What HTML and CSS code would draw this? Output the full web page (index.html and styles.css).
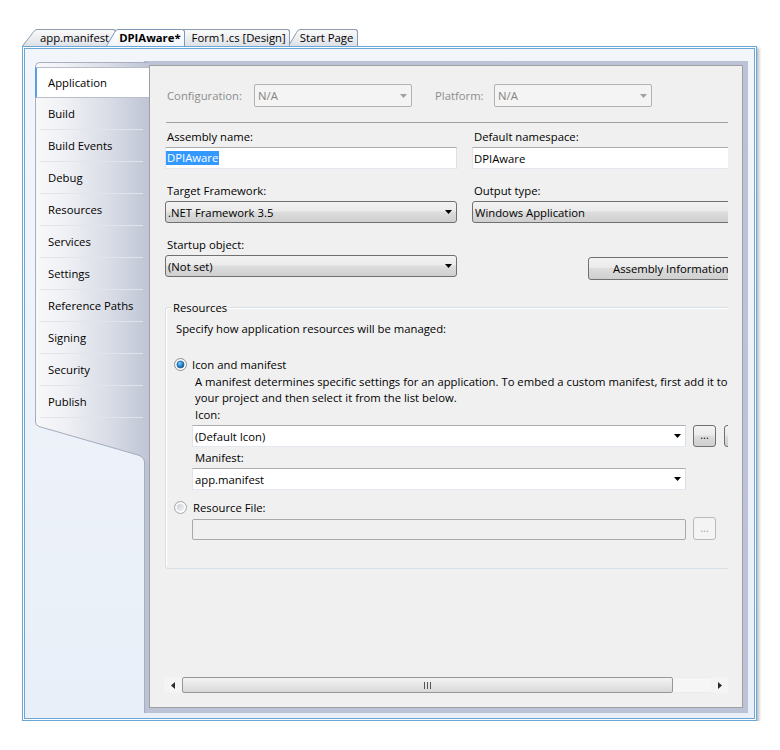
FILE: index.html
```html
<!DOCTYPE html>
<html>
<head>
<meta charset="utf-8">
<title>DPIAware - Project Properties</title>
<link rel="stylesheet" href="styles.css">
</head>
<body>
<svg class="defs" width="0" height="0" aria-hidden="true">
  <defs>
    <linearGradient id="gTab" x1="0" y1="0" x2="0" y2="1">
      <stop offset="0" stop-color="#fafafa"/>
      <stop offset="1" stop-color="#dde1e7"/>
    </linearGradient>
    <linearGradient id="gTabA" x1="0" y1="0" x2="0" y2="1">
      <stop offset="0" stop-color="#ffffff"/>
      <stop offset="1" stop-color="#f1f5fa"/>
    </linearGradient>
    <linearGradient id="gSide" gradientUnits="userSpaceOnUse" x1="0" y1="0" x2="114" y2="0">
      <stop offset="0" stop-color="#f8f8fa"/>
      <stop offset="0.25" stop-color="#f0f1f5"/>
      <stop offset="0.65" stop-color="#d9dce6"/>
      <stop offset="1" stop-color="#bfc5d5"/>
    </linearGradient>
    <linearGradient id="gRadio" x1="0" y1="0" x2="1" y2="1">
      <stop offset="0" stop-color="#f4f4f4"/>
      <stop offset="1" stop-color="#ffffff"/>
    </linearGradient>
    <linearGradient id="gRadioIn" x1="0" y1="0" x2="1" y2="1">
      <stop offset="0" stop-color="#c9cdd3"/>
      <stop offset="1" stop-color="#f4f5f6"/>
    </linearGradient>
    <radialGradient id="gDot" cx="0.4" cy="0.35" r="0.7">
      <stop offset="0" stop-color="#8fd0f5"/>
      <stop offset="0.5" stop-color="#2a8ad4"/>
      <stop offset="1" stop-color="#12508f"/>
    </radialGradient>
  </defs>
</svg>

<div class="tabstrip">
  <div class="tab t1">
    <svg class="slant" width="15" height="17" viewBox="0 0 15 17"><path class="sl-fill" d="M0,17 L11,3.5 Q13,1 15,1 L15,17 Z"/><path class="sl-line" d="M0.5,17 L11,3.5 Q13,0.5 15,0.5"/></svg>
    <div class="tab-body">app.manifest</div>
  </div>
  <div class="tab t2 active">
    <svg class="slant" width="12" height="17" viewBox="0 0 12 17"><path class="sl-fill" d="M0,17 L8.5,3.5 Q10,1 12,1 L12,17 Z"/><path class="sl-line" d="M0.5,17 L8.5,3.5 Q10,0.5 12,0.5"/></svg>
    <div class="tab-body">DPIAware*</div>
  </div>
  <div class="tab t3">
    <svg class="slant" width="12" height="17" viewBox="0 0 12 17"><path class="sl-fill" d="M0,17 L8.5,3.5 Q10,1 12,1 L12,17 Z"/><path class="sl-line" d="M0.5,17 L8.5,3.5 Q10,0.5 12,0.5"/></svg>
    <div class="tab-body">Form1.cs [Design]</div>
  </div>
  <div class="tab t4">
    <svg class="slant" width="12" height="17" viewBox="0 0 12 17"><path class="sl-fill" d="M0,17 L8.5,3.5 Q10,1 12,1 L12,17 Z"/><path class="sl-line" d="M0.5,17 L8.5,3.5 Q10,0.5 12,0.5"/></svg>
    <div class="tab-body">Start Page</div>
  </div>
</div>

<div class="frame">
  <div class="frame-in">
    <div class="sidebar">
      <div class="side-list">
        <div class="side-item sel">Application</div>
        <div class="side-item">Build</div>
        <div class="side-item">Build Events</div>
        <div class="side-item">Debug</div>
        <div class="side-item">Resources</div>
        <div class="side-item">Services</div>
        <div class="side-item">Settings</div>
        <div class="side-item">Reference Paths</div>
        <div class="side-item">Signing</div>
        <div class="side-item">Security</div>
        <div class="side-item">Publish</div>
      </div>
      <svg class="side-tail" width="114" height="44" viewBox="0 0 114 44">
        <path d="M0,0 L0,4 Q0,7.5 4,8.5 L103,37 Q109,39 109,44 L114,44 L114,0 Z" fill="url(#gSide)"/>
        <path d="M0.5,0 L0.5,4 Q0.5,7.5 4,8.5 L103,37 Q109.5,39 109.5,44" fill="none" stroke="#a3aabd" stroke-width="1"/>
      </svg>
    </div>

    <div class="band">
      <div class="panel">
        <div class="viewport">
          <div class="cfg-row">
            <div class="cfg-label c1">Configuration:</div>
            <div class="combo-dis"><span>N/A</span><svg width="7" height="4" viewBox="0 0 7 4"><polygon points="0,0 7,0 3.5,4" fill="#a0a0a0"/></svg></div>
            <div class="cfg-label c2">Platform:</div>
            <div class="combo-dis"><span>N/A</span><svg width="7" height="4" viewBox="0 0 7 4"><polygon points="0,0 7,0 3.5,4" fill="#a0a0a0"/></svg></div>
          </div>
          <div class="sep"></div>

          <div class="fields">
            <div class="field">
              <div class="lbl">Assembly name:</div>
              <div class="tb"><span class="selected">DPIAware</span></div>
            </div>
            <div class="field">
              <div class="lbl">Default namespace:</div>
              <div class="tb"><span class="tb-text">DPIAware</span></div>
            </div>
            <div class="field">
              <div class="lbl">Target Framework:</div>
              <div class="dd"><span>.NET Framework 3.5</span><svg width="7" height="4" viewBox="0 0 7 4"><polygon points="0,0 7,0 3.5,4" fill="#000"/></svg></div>
            </div>
            <div class="field">
              <div class="lbl">Output type:</div>
              <div class="dd"><span>Windows Application</span><svg width="7" height="4" viewBox="0 0 7 4"><polygon points="0,0 7,0 3.5,4" fill="#000"/></svg></div>
            </div>
            <div class="field">
              <div class="lbl">Startup object:</div>
              <div class="dd"><span>(Not set)</span><svg width="7" height="4" viewBox="0 0 7 4"><polygon points="0,0 7,0 3.5,4" fill="#000"/></svg></div>
            </div>
            <div class="field">
              <div class="btn asm-btn">Assembly Information...</div>
            </div>
          </div>

          <div class="group">
            <div class="legend">Resources</div>
            <div class="specify">Specify how application resources will be managed:</div>

            <div class="radio-row">
              <svg class="radio" width="13" height="13" viewBox="0 0 13 13">
                <circle cx="6.5" cy="6.5" r="6" fill="url(#gRadio)" stroke="#8e8f90"/>
                <circle cx="6.5" cy="6.5" r="3.6" fill="url(#gDot)" stroke="#1d5c93" stroke-width="0.6"/>
              </svg>
              <span class="radio-label">Icon and manifest</span>
            </div>
            <div class="desc">A manifest determines specific settings for an application. To embed a custom manifest, first add it to<br>your project and then select it from the list below.</div>
            <div class="sub-label">Icon:</div>
            <div class="ctl-row">
              <div class="ecb"><span>(Default Icon)</span><svg width="7" height="4" viewBox="0 0 7 4"><polygon points="0,0 7,0 3.5,4" fill="#000"/></svg></div>
              <div class="btn dots">...</div>
              <div class="btn dots second">...</div>
            </div>
            <div class="sub-label mt3">Manifest:</div>
            <div class="ctl-row">
              <div class="ecb"><span>app.manifest</span><svg width="7" height="4" viewBox="0 0 7 4"><polygon points="0,0 7,0 3.5,4" fill="#000"/></svg></div>
            </div>

            <div class="radio-row r2">
              <svg class="radio" width="13" height="13" viewBox="0 0 13 13">
                <circle cx="6.5" cy="6.5" r="6" fill="url(#gRadio)" stroke="#a4a5a6"/>
                <circle cx="6.5" cy="6.5" r="3.6" fill="url(#gRadioIn)"/>
              </svg>
              <span class="radio-label l2">Resource File:</span>
            </div>
            <div class="ctl-row res-row">
              <div class="tb-dis"></div>
              <div class="btn-dis dots">...</div>
            </div>
          </div>
        </div>

        <div class="hscroll">
          <div class="sb-btn"><svg width="4" height="7" viewBox="0 0 4 7"><polygon points="4,0 4,7 0,3.5" fill="#2b2b2b"/></svg></div>
          <div class="sb-thumb"><svg width="7" height="7" viewBox="0 0 7 7"><rect x="0" y="0" width="1" height="7" fill="#555"/><rect x="3" y="0" width="1" height="7" fill="#555"/><rect x="6" y="0" width="1" height="7" fill="#555"/></svg></div>
          <div class="sb-track"></div>
          <div class="sb-btn r"><svg width="4" height="7" viewBox="0 0 4 7"><polygon points="0,0 0,7 4,3.5" fill="#2b2b2b"/></svg></div>
        </div>
      </div>
    </div>
  </div>
</div>
</body>
</html>
```
FILE: styles.css
```css
html, body {
  margin: 0;
  padding: 0;
  background: #ffffff;
}
body {
  font-family: "Open Sans", "Noto Sans", "Liberation Sans", sans-serif;
  font-size: 11.3px;
  color: #000;
}
.defs {
  display: block;
  width: 0;
  height: 0;
}

/* ---------- document tabs ---------- */
.tabstrip {
  display: flex;
  align-items: flex-end;
  height: 17px;
  margin-top: 29px;
  padding-left: 22px;
}
.tab {
  display: flex;
  height: 17px;
  position: relative;
}
.t1 { z-index: 3; }
.t2 { z-index: 4; margin-left: -10px; }
.t3 { z-index: 2; margin-left: -12px; }
.t4 { z-index: 1; margin-left: -2px; }
.slant { display: block; flex: none; }
.sl-fill { fill: url(#gTab); }
.sl-line { fill: none; stroke: #8e9bad; stroke-width: 1; }
.active .sl-fill { fill: url(#gTabA); }
.active .sl-line { stroke: #7f98b6; }
.tab-body {
  height: 16px;
  line-height: 16px;
  border-top: 1px solid #8e9bad;
  border-right: 1px solid #8e9bad;
  border-top-right-radius: 3px;
  background: linear-gradient(#fafafa, #dde1e7);
  white-space: nowrap;
}
.t1 .tab-body { padding: 0 6px 0 3px; }
.t2 .tab-body { padding: 0 3px 0 1px; font-weight: bold; }
.t3 .tab-body { padding: 0 3px 0 7px; }
.t4 .tab-body { padding: 0 4px 0 0; }
.active .tab-body {
  background: linear-gradient(#ffffff, #f1f5fa);
  border-color: #7f98b6;
}

/* ---------- window frame ---------- */
.frame {
  margin-left: 22px;
  width: 735px;
  height: 675px;
  box-sizing: border-box;
  border: 1px solid #6ba6d4;
  padding: 1px;
  background: #fdfeff;
  box-shadow: 2px 2px 3px rgba(0, 0, 0, 0.28);
}
.frame-in {
  height: 100%;
  box-sizing: border-box;
  border: 1px solid #6ba6d4;
  background: linear-gradient(#f2f6fb, #e9eff8);
  padding: 12px 6px 5px 10px;
  display: flex;
  min-width: 0;
}

/* ---------- left navigation ---------- */
.sidebar {
  width: 114px;
  flex: none;
  margin-top: 1px;
  display: flex;
  flex-direction: column;
  position: relative;
  z-index: 2;
}
.side-list {
  border-left: 1px solid #a9afc1;
  border-top: 1px solid #a9afc1;
  border-top-left-radius: 5px;
  background: linear-gradient(to right, #f8f8fa 0%, #f0f1f5 25%, #d9dce6 65%, #bfc5d5 100%);
  padding-top: 4px;
}
.side-item {
  height: 31px;
  line-height: 31px;
  margin: 0 6px 0 4px;
  padding-left: 8px;
  border-bottom: 1px solid #e2e4ec;
  white-space: nowrap;
}
.side-item.sel {
  margin: 0 0 0 -1px;
  padding-left: 11px;
  height: 29px;
  line-height: 29px;
  background: #ffffff;
  border-left: 2px solid #58a2e4;
  border-top: 1px solid #b8bdcb;
  border-bottom: 1px solid #b8bdcb;
}
.side-tail { display: block; }

/* ---------- property page ---------- */
.band {
  flex: 1;
  min-width: 0;
  margin-left: -5px;
  background: #bcc3d6;
  border-left: 1px solid #a7aec0;
  padding: 4px 5px 5px 4px;
  display: flex;
  flex-direction: column;
}
.panel {
  flex: 1;
  min-width: 0;
  min-height: 0;
  border: 1px solid #a0a0a0;
  background: #f0f0f0;
  display: flex;
  flex-direction: column;
  padding: 0 14px 14px 14px;
  overflow: hidden;
}
.viewport {
  flex: 1;
  min-width: 0;
  min-height: 0;
  overflow: hidden;
}

.cfg-row {
  display: flex;
  align-items: center;
  height: 23px;
  margin-top: 18px;
}
.cfg-label {
  color: #8d8d8d;
  white-space: nowrap;
  box-sizing: border-box;
  flex: none;
}
.cfg-label.c1 { width: 90px; padding-left: 3px; }
.cfg-label.c2 { width: 59px; margin-left: 23px; }
.combo-dis {
  width: 158px;
  height: 23px;
  flex: none;
  box-sizing: border-box;
  border: 1px solid #afb3b6;
  border-radius: 2px;
  background: #f4f4f4;
  color: #838383;
  padding: 0 4px 0 3px;
  display: flex;
  align-items: center;
  justify-content: space-between;
}
.sep {
  height: 1px;
  background: #a0a0a0;
  margin: 15px 0 0 2px;
}

.fields {
  display: grid;
  grid-template-columns: 292px 292px;
  column-gap: 15px;
  row-gap: 14px;
  margin: 6px 0 0 1px;
}
.field { display: flex; flex-direction: column; }
.lbl {
  line-height: 16px;
  padding-left: 2px;
  margin-bottom: 2px;
  white-space: nowrap;
}
.tb {
  height: 22px;
  box-sizing: border-box;
  border: 1px solid;
  border-color: #abadb3 #dbdfe6 #e3e9ef #e2e3ea;
  background: #ffffff;
  display: flex;
  align-items: center;
}
.selected {
  background: #3399ff;
  color: #ffffff;
  line-height: 14px;
  padding: 0 1px;
}
.tb-text { padding-left: 1px; }
.dd {
  height: 22px;
  box-sizing: border-box;
  border: 1px solid #707070;
  border-radius: 3px;
  background: linear-gradient(#f2f2f2 0%, #ebebeb 45%, #dddddd 50%, #cfcfcf 100%);
  padding: 0 4px 0 2px;
  display: flex;
  align-items: center;
  justify-content: space-between;
  white-space: nowrap;
}
.btn {
  box-sizing: border-box;
  border: 1px solid #707070;
  border-radius: 3px;
  background: linear-gradient(#f2f2f2 0%, #ebebeb 45%, #dddddd 50%, #cfcfcf 100%);
  white-space: nowrap;
}
.asm-btn {
  width: 175px;
  height: 23px;
  line-height: 21px;
  margin: 20px 0 0 116px;
  padding-left: 24px;
}

.group {
  margin: 27px 0 0 1px;
  width: 640px;
  border: 1px solid #d5dfe5;
  border-radius: 3px;
  box-shadow: inset 1px 1px 0 #ffffff;
  padding: 0 0 28px 0;
}
.legend {
  width: fit-content;
  margin: -8px 0 0 5px;
  padding: 0 2px;
  line-height: 16px;
  background: #f0f0f0;
}
.specify {
  margin-top: 5px;
  padding-left: 10px;
  line-height: 16px;
  white-space: nowrap;
}
.radio-row {
  display: flex;
  align-items: center;
  height: 16px;
  margin: 19px 0 0 8px;
}
.radio-row.r2 { margin-top: 9px; }
.radio { display: block; flex: none; }
.radio-label { margin-left: 5px; white-space: nowrap; }
.radio-label.l2 { margin-left: 6px; }
.desc {
  margin: 2px 0 0 29px;
  line-height: 16px;
  white-space: nowrap;
}
.sub-label {
  margin: 1px 0 0 29px;
  line-height: 16px;
}
.sub-label.mt3 { margin-top: 3px; }
.ctl-row {
  display: flex;
  align-items: flex-end;
  margin: 2px 0 0 26px;
}
.ecb {
  width: 494px;
  height: 22px;
  flex: none;
  box-sizing: border-box;
  border: 1px solid;
  border-color: #abadb3 #dbdfe6 #e3e9ef #e2e3ea;
  background: #ffffff;
  padding: 0 4px 0 2px;
  display: flex;
  align-items: center;
  justify-content: space-between;
}
.dots {
  width: 23px;
  height: 22px;
  flex: none;
  margin-left: 7px;
  text-align: center;
  line-height: 18px;
  font-size: 11px;
}
.dots.second { margin-left: 8px; }
.res-row { margin-top: 2px; }
.tb-dis {
  width: 494px;
  height: 21px;
  flex: none;
  box-sizing: border-box;
  border: 1px solid #a9a9a9;
  border-radius: 2px;
  background: #f0f0f0;
}
.btn-dis {
  box-sizing: border-box;
  height: 23px;
  border: 1px solid #b9b9b9;
  border-radius: 3px;
  background: #f4f4f4;
  color: #a3a3a3;
  line-height: 19px;
}

/* ---------- horizontal scrollbar ---------- */
.hscroll {
  height: 16px;
  flex: none;
  display: flex;
  background: #f4f4f4;
}
.sb-btn {
  width: 18px;
  flex: none;
  display: flex;
  align-items: center;
  justify-content: center;
}
.sb-btn.r { width: 17px; }
.sb-thumb {
  width: 491px;
  flex: none;
  box-sizing: border-box;
  border: 1px solid #979797;
  border-radius: 2px;
  background: linear-gradient(#f4f4f4 0%, #e6e6e6 50%, #d8d8d8 100%);
  display: flex;
  align-items: center;
  justify-content: center;
}
.sb-track {
  flex: 1;
  border-top: 1px solid #ebebeb;
  border-bottom: 1px solid #ebebeb;
  background: #f6f6f6;
}
```
